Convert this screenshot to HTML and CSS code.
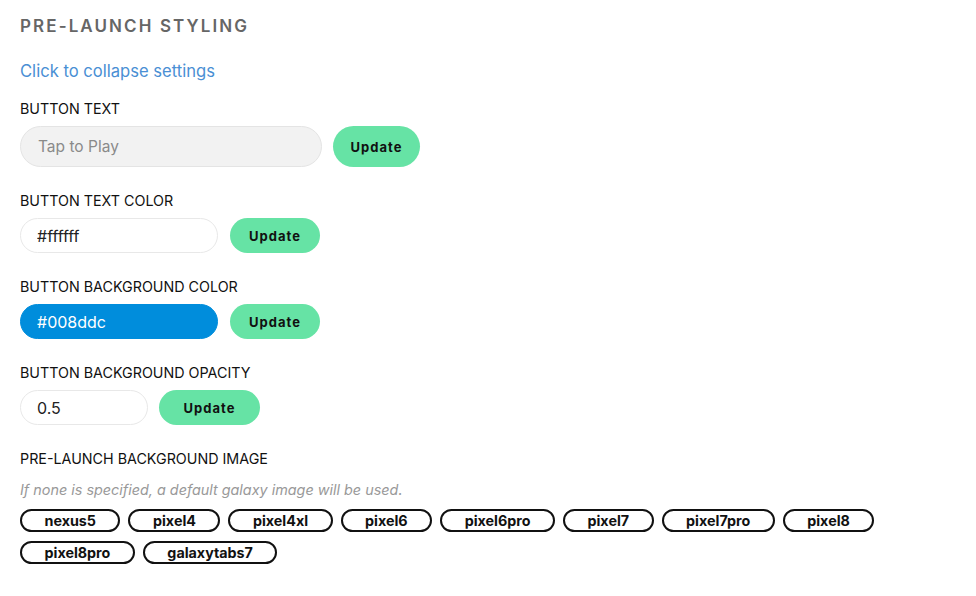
FILE: index.html
```html
<!DOCTYPE html>
<html>
<head>
<meta charset="utf-8">
<link rel="stylesheet" href="styles.css">
</head>
<body>
<div class="panel">
  <h2 class="title">PRE-LAUNCH STYLING</h2>
  <a class="collapse">Click to collapse settings</a>

  <div class="field">
    <div class="label">BUTTON TEXT</div>
    <div class="row">
      <input class="input input-lg input-grey" placeholder="Tap to Play">
      <button class="update update-lg">Update</button>
    </div>
  </div>

  <div class="field">
    <div class="label">BUTTON TEXT COLOR</div>
    <div class="row">
      <input class="input input-md" value="#ffffff">
      <button class="update">Update</button>
    </div>
  </div>

  <div class="field">
    <div class="label">BUTTON BACKGROUND COLOR</div>
    <div class="row">
      <input class="input input-md input-blue" value="#008ddc">
      <button class="update">Update</button>
    </div>
  </div>

  <div class="field">
    <div class="label">BUTTON BACKGROUND OPACITY</div>
    <div class="row">
      <input class="input input-sm" value="0.5">
      <button class="update update-wide">Update</button>
    </div>
  </div>

  <div class="field">
    <div class="label">PRE-LAUNCH BACKGROUND IMAGE</div>
    <div class="hint">If none is specified, a default galaxy image will be used.</div>
    <div class="chips">
      <span class="chip">nexus5</span>
      <span class="chip">pixel4</span>
      <span class="chip">pixel4xl</span>
      <span class="chip">pixel6</span>
      <span class="chip">pixel6pro</span>
      <span class="chip">pixel7</span>
      <span class="chip">pixel7pro</span>
      <span class="chip">pixel8</span>
      <span class="chip">pixel8pro</span>
      <span class="chip">galaxytabs7</span>
    </div>
  </div>
</div>
</body>
</html>
```

FILE: styles.css
```css
* { box-sizing: border-box; }
body {
  margin: 0;
  background: #fff;
  font-family: "Inter", "Liberation Sans", sans-serif;
  color: #111;
}
.panel {
  padding: 14px 20px 0 20px;
}
.title {
  margin: 0;
  font-size: 17px;
  font-weight: 600;
  letter-spacing: 2.1px;
  color: #666;
  line-height: 24px;
}
.collapse {
  display: block;
  margin-top: 21px;
  font-size: 16.6px;
  color: #4a8fd4;
  line-height: 24px;
  cursor: pointer;
}
.field { margin-top: 17px; }
.field + .field { margin-top: 25px; }
.label {
  font-size: 14.3px;
  line-height: 18px;
  color: #111;
  margin-bottom: 8px;
}
.row {
  display: flex;
  align-items: center;
  gap: 12px;
}
.input {
  font-family: inherit;
  font-size: 16px;
  color: #222;
  border: 1px solid #e8e8e8;
  border-radius: 999px;
  background: #fff;
  padding: 0 16px;
  height: 35px;
  outline: none;
}
.input-lg { width: 302px; height: 41px; font-size: 15.5px; padding: 0 17px; }
.input-grey { background: #f2f2f2; border-color: #e4e4e4; }
.input-grey::placeholder { color: #8a8a8a; }
.input-md { width: 198px; }
.input-sm { width: 128px; }
.input-blue { background: #008ddc; border-color: #008ddc; color: #fff; }
.update {
  font-family: inherit;
  font-size: 13px;
  font-weight: 700;
  letter-spacing: 1px;
  color: #111;
  background: #66e3a5;
  border: none;
  border-radius: 999px;
  height: 35px;
  width: 90px;
  padding: 0;
}
.update-lg { height: 41px; width: 87px; margin-left: -1px; }
.update-wide { width: 101px; margin-left: -1px; }
.hint {
  font-size: 14.4px;
  font-style: italic;
  color: #999;
  line-height: 18px;
  margin-top: 13px;
  margin-bottom: 10px;
}
.chips {
  display: flex;
  flex-wrap: wrap;
  gap: 9px 8px;
  max-width: 900px;
}
.chip {
  display: inline-block;
  border: 2px solid #111;
  border-radius: 999px;
  font-size: 14.3px;
  font-weight: 700;
  line-height: 19px;
  padding: 0 22.5px;
  color: #111;
  text-align: center;
}
```
